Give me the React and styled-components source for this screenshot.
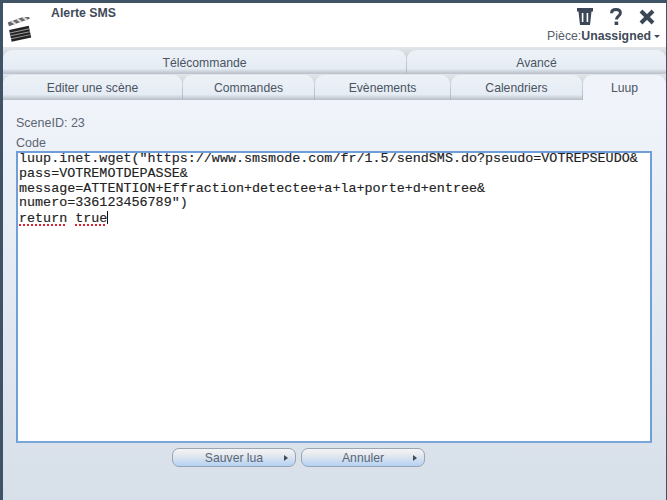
import React from 'react';
import styled, { createGlobalStyle } from 'styled-components';

const Global = createGlobalStyle`
    html, body {
        margin: 0;
        padding: 0;
        background: #3f5266;
    }
    body {
        font-family: "Liberation Sans", Arial, sans-serif;
        overflow: hidden;
    }
`

const Frame = styled.div`
    width: 667px;
    height: 500px;
    box-sizing: border-box;
    padding: 3px 1px 0 3px;
    display: flex;
    flex-direction: column;
    background: #3f5266;
`

const Header = styled.header`
    height: 44px;
    background: #ffffff;
    display: flex;
    justify-content: space-between;
    flex: none;
`

const TitleBlock = styled.div`
    display: flex;
    gap: 19px;
    padding-left: 4px;
`

const Logo = styled.svg`
    width: 25px;
    height: 25px;
    margin-top: 14px;
`

const Title = styled.div`
    font-size: 12.3px;
    font-weight: bold;
    color: #3f4a5a;
    margin-top: 3px;
`

const Tools = styled.div`
    display: flex;
    flex-direction: column;
    align-items: flex-end;
    padding: 5px 6px 0 0;
    gap: 1px;
`

const IconRow = styled.div`
    display: flex;
    align-items: center;
    gap: 17px;
    height: 17px;
    margin-right: 5px;
`

const RoomLine = styled.div`
    font-size: 12.3px;
    color: #55606e;
    line-height: 15px;
    margin-top: 3px;
    display: flex;
    align-items: center;

    b {
        color: #3f4a5a;
    }
`

const Caret = styled.span`
    width: 0;
    height: 0;
    margin-left: 3px;
    border-left: 3px solid transparent;
    border-right: 3px solid transparent;
    border-top: 3px solid #3f4a5a;
`

const TabRow = styled.div`
    height: ${({ $h }) => $h}px;
    padding-top: ${({ $top }) => $top}px;
    box-sizing: border-box;
    display: flex;
    gap: 1px;
    flex: none;
    background: linear-gradient(#e2e6ea, #aeb6bf);
`

const Tab = styled.div`
    width: ${({ $w }) => $w}px;
    flex: ${({ $grow }) => ($grow ? 1 : 'none')};
    box-sizing: border-box;
    border-radius: 9px 9px 0 0;
    font-size: 12.2px;
    color: #4a5462;
    text-align: center;
    line-height: 26px;
    background: ${({ $active }) => ($active
        ? '#f0f4fa'
        : 'linear-gradient(#edf2f8 0%, #e6ecf4 78%, #ccd2da 90%, #b9bfc8 100%)')};
`

const Body = styled.main`
    flex: 1;
    min-height: 0;
    display: flex;
    flex-direction: column;
    padding: 0 14px 0 13px;
    background: linear-gradient(#f0f4fa, #d7dfe9);
`

const Label = styled.div`
    font-size: 12.5px;
    line-height: 14px;
    color: #5b6572;
    margin-top: ${({ $top }) => $top}px;
`

const Code = styled.div`
    height: 292px;
    flex: none;
    box-sizing: border-box;
    margin-top: 1px;
    padding: 0 0 0 1px;
    background: #ffffff;
    border: 2px solid #6f9fd6;
    border-bottom-color: #7aa6da;
    overflow: hidden;
`

const CodeText = styled.div`
    margin-top: -1px;
    font-family: "Liberation Mono", monospace;
    font-size: 13.4px;
    line-height: 14.75px;
    color: #222222;
    -webkit-text-stroke: 0.15px #222222;
    white-space: pre;
`

const Misspelled = styled.span`
    text-decoration: underline dotted #e0202a 1.5px;
    text-underline-offset: 2px;
`

const Cursor = styled.span`
    display: inline-block;
    width: 1px;
    height: 13px;
    background: #111111;
    vertical-align: -2px;
`

const Actions = styled.div`
    display: flex;
    gap: 5px;
    margin-top: 5px;
    padding-left: 156px;
`

const Button = styled.button`
    position: relative;
    width: 124px;
    height: 19px;
    padding: 1px 0 0;
    border: 1px solid #9aa4b2;
    border-radius: 7px;
    background: linear-gradient(#f3f4f6 0%, #e6e9ee 35%, #b4d2f4 100%);
    font-family: inherit;
    font-size: 12.2px;
    color: #5a6676;

    &::after {
        content: '';
        position: absolute;
        right: 7px;
        top: 6px;
        border-left: 4px solid #3f4a5a;
        border-top: 3px solid transparent;
        border-bottom: 3px solid transparent;
    }
`

const Clapper = () => (
    <Logo viewBox="0 0 25 25">
        <g transform="rotate(-12 12 16)">
            <rect x="3" y="11" width="20" height="12" fill="#222" />
            <path d="M3 14h20M3 17h20M3 20h20" stroke="#999" strokeWidth="1" />
        </g>
        <g transform="rotate(-20 3 9)">
            <rect x="2" y="5" width="22" height="4" fill="#666" />
            <path d="M6 5l3 4M12 5l3 4M18 5l3 4" stroke="#ddd" strokeWidth="2" />
        </g>
    </Logo>
)

const Trash = () => (
    <svg width="16" height="17" viewBox="0 0 16 17">
        <path d="M0 0h16v3.5h-1.5l-1.5 13.5h-10l-1.5-13.5H0z" fill="#3b4656" />
        <path d="M5.6 5v9M10.4 5v9" stroke="#fff" strokeWidth="1.6" />
    </svg>
)

const Help = () => (
    <svg width="12" height="17" viewBox="0 0 12 17">
        <path d="M1.6 5.2C1.6 2.8 3.4 1.6 6 1.6s4.4 1.3 4.4 3.4c0 3.2-4 3.1-4 6.6" fill="none" stroke="#3b4656" strokeWidth="3" />
        <rect x="4.6" y="13.6" width="3.6" height="3.4" fill="#3b4656" />
    </svg>
)

const Close = () => (
    <svg width="16" height="16" viewBox="0 0 16 16">
        <path d="M2 2l12 12M14 2L2 14" stroke="#3b4656" strokeWidth="4" />
    </svg>
)

const sceneLua = `luup.inet.wget("https://www.smsmode.com/fr/1.5/sendSMS.do?pseudo=VOTREPSEUDO&
pass=VOTREMOTDEPASSE&
message=ATTENTION+Effraction+detectee+a+la+porte+d+entree&
numero=336123456789")
`

export default function App() {
    return (
        <Frame>
            <Global />
            <Header>
                <TitleBlock>
                    <Clapper />
                    <Title>Alerte SMS</Title>
                </TitleBlock>
                <Tools>
                    <IconRow>
                        <Trash />
                        <Help />
                        <Close />
                    </IconRow>
                    <RoomLine>Pièce:<b>Unassigned</b><Caret /></RoomLine>
                </Tools>
            </Header>
            <TabRow $h={27} $top={3}>
                <Tab $w={403}>Télécommande</Tab>
                <Tab $grow>Avancé</Tab>
            </TabRow>
            <TabRow $h={26} $top={1}>
                <Tab $w={179}>Editer une scène</Tab>
                <Tab $w={131}>Commandes</Tab>
                <Tab $w={135}>Evènements</Tab>
                <Tab $w={131}>Calendriers</Tab>
                <Tab $grow $active>Luup</Tab>
            </TabRow>
            <Body>
                <Label $top={16}>SceneID: 23</Label>
                <Label $top={6}>Code</Label>
                <Code>
                    <CodeText>
                        {sceneLua}
                        <Misspelled>return</Misspelled> <Misspelled>true</Misspelled><Cursor />
                    </CodeText>
                </Code>
                <Actions>
                    <Button>Sauver lua</Button>
                    <Button>Annuler</Button>
                </Actions>
            </Body>
        </Frame>
    )
}
